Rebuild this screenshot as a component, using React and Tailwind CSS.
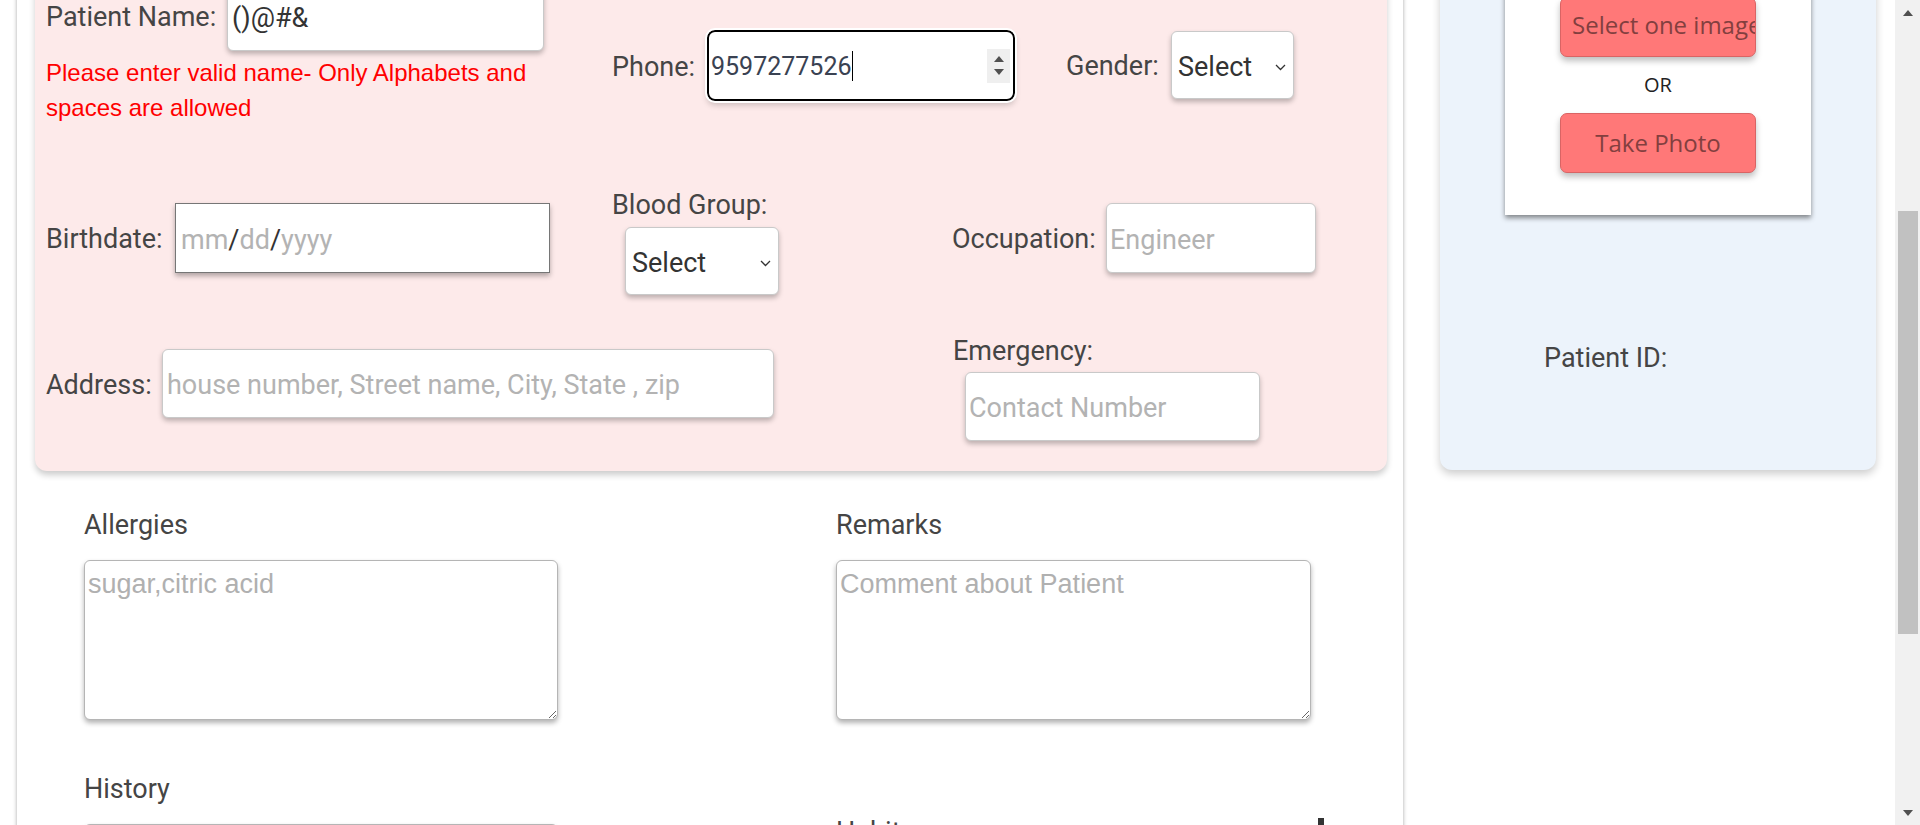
import React from 'react'

const label = "font-['Roboto',sans-serif] text-[27px] leading-[36px] text-[#454545] whitespace-nowrap shrink-0"
const field = "bg-white border border-[#c9c9c9] rounded-[6px] shadow-[0_3px_5px_rgba(0,0,0,0.25)] flex items-center pt-[4px] font-['Roboto',sans-serif] text-[27px] whitespace-nowrap overflow-hidden"
const hint = "text-[#b3b3b3]"
const area = "block resize-y bg-white border border-[#b5b5b5] rounded-[6px] shadow-[0_3px_5px_rgba(0,0,0,0.3)] pt-[8px] px-[3px] font-['Liberation_Sans',Arial,sans-serif] text-[27px] leading-[31px] text-[#333] placeholder:text-[#b0b0b0] outline-none"
const redBtn = "h-[60px] w-[196px] bg-[#ff7878] border border-[#d96464] rounded-[7px] shadow-[0_4px_6px_rgba(0,0,0,0.25)] flex items-center overflow-hidden whitespace-nowrap font-['Open_Sans',sans-serif] text-[24px] text-[#833f3f]"

function Chevron() {
  return (
    <svg width="11" height="7" viewBox="0 0 11 7" fill="none" stroke="#333" strokeWidth="1.3">
      <polyline points="1,1 5.5,5.5 10,1" />
    </svg>
  )
}

function SelectBox({ className }) {
  return (
    <div className={field + ' justify-between pl-[6px] pr-[7px] text-[#333] ' + className}>
      <span>Select</span>
      <Chevron />
    </div>
  )
}

function Triangle({ down }) {
  return (
    <svg width="10" height="6" viewBox="0 0 10 6">
      <polygon points={down ? '0,0 10,0 5,6' : '0,6 10,6 5,0'} fill="#505050" />
    </svg>
  )
}

export default function App() {
  return (
    <div className="w-[1920px] h-[825px] overflow-hidden flex bg-white">
      <div className="flex-1 flex items-start">
        {/* form column */}
        <div className="ml-[17px] w-[1386px] -mt-[60px] h-[1000px] shrink-0 bg-white shadow-[0_0_4px_rgba(0,0,0,0.35)] flex flex-col">
          <div className="ml-[18px] w-[1352px] bg-[#fdeaea] rounded-[12px] shadow-[0_4px_6px_rgba(0,0,0,0.2)] pt-[41px] pb-[30px] pl-[11px]">
            {/* name / phone / gender */}
            <div className="flex items-start">
              <div className="w-[566px] flex flex-col">
                <div className="flex items-center">
                  <span className={label + ' w-[181px] pt-[2px]'}>Patient Name:</span>
                  <div className={field + ' w-[317px] h-[70px] px-[4px] text-[#333]'}>()@#&amp;</div>
                </div>
                <p className="mt-[4px] w-[500px] font-['Liberation_Sans',Arial,sans-serif] text-[24px] leading-[35px] text-[#ff0000]">
                  Please enter valid name- Only Alphabets and spaces are allowed
                </p>
              </div>
              <div className="w-[454px] mt-[49px] flex items-center">
                <span className={label + ' w-[95px] pt-[2px]'}>Phone:</span>
                <div className="w-[308px] h-[71px] bg-white border-2 border-black rounded-[8px] outline-2 outline-white shadow-[0_4px_6px_rgba(0,0,0,0.2)] flex items-center pl-[2px] pr-[3px] font-['Roboto',sans-serif] text-[25px] text-[#3a4252]">
                  <span className="pt-[3px]">9597277526</span>
                  <span className="w-px h-[30px] bg-black" />
                  <div className="ml-auto w-[23px] h-[34px] bg-[#efefef] flex flex-col items-center justify-center gap-[7px]">
                    <Triangle />
                    <Triangle down />
                  </div>
                </div>
              </div>
              <div className="mt-[50px] flex items-center">
                <span className={label + ' w-[105px] pt-[2px]'}>Gender:</span>
                <SelectBox className="w-[123px] h-[68px]" />
              </div>
            </div>

            {/* birthdate / blood group / occupation */}
            <div className="flex items-start mt-[60px]">
              <div className="w-[566px] mt-[18px] flex items-center">
                <span className={label + ' w-[129px] pt-[2px]'}>Birthdate:</span>
                <div className="w-[375px] h-[70px] bg-white border border-[#767676] shadow-[0_3px_5px_rgba(0,0,0,0.3)] flex items-center pl-[5px] pt-[4px] font-['Roboto',sans-serif] text-[27px] text-[#333]">
                  <span className={hint}>mm</span>/<span className={hint}>dd</span>/<span className={hint}>yyyy</span>
                </div>
              </div>
              <div className="w-[340px] flex flex-col">
                <span className={label + ' pt-[2px]'}>Blood Group:</span>
                <SelectBox className="ml-[13px] mt-[4px] w-[154px] h-[68px]" />
              </div>
              <div className="mt-[18px] flex items-center">
                <span className={label + ' w-[154px] pt-[2px]'}>Occupation:</span>
                <div className={field + ' w-[210px] h-[70px] px-[3px] ' + hint}>Engineer</div>
              </div>
            </div>

            {/* address / emergency */}
            <div className="flex items-start mt-[36px]">
              <div className="w-[907px] mt-[18px] flex items-center">
                <span className={label + ' w-[116px] pt-[2px]'}>Address:</span>
                <div className={field + ' w-[612px] h-[69px] px-[4px] ' + hint}>house number, Street name, City, State , zip</div>
              </div>
              <div className="flex flex-col">
                <span className={label + ' pt-[2px]'}>Emergency:</span>
                <div className={field + ' ml-[12px] mt-[3px] w-[295px] h-[69px] px-[3px] ' + hint}>Contact Number</div>
              </div>
            </div>
          </div>

          {/* notes */}
          <div className="flex pl-[67px] mt-[36px]">
            <div className="w-[752px] flex flex-col">
              <span className={label}>Allergies</span>
              <textarea readOnly className={area + ' mt-[17px] w-[474px] h-[160px]'} placeholder="sugar,citric acid" />
              <span className={label + ' mt-[51px]'}>History</span>
              <textarea readOnly className={area + ' mt-[17px] w-[474px] h-[160px]'} />
            </div>
            <div className="flex flex-col">
              <span className={label}>Remarks</span>
              <textarea readOnly className={area + ' mt-[17px] w-[475px] h-[160px]'} placeholder="Comment about Patient" />
              <div className="mt-[94px] w-[488px] flex justify-between items-start">
                <span className={label}>Habits</span>
                <div className="mt-[4px] w-[6px] h-[24px] bg-[#333]" />
              </div>
            </div>
          </div>
        </div>

        {/* photo column */}
        <div className="ml-[37px] w-[436px] -mt-[60px] shrink-0 bg-[#ecf3fb] rounded-[12px] shadow-[0_4px_8px_rgba(0,0,0,0.2)] flex flex-col pb-[94px]">
          <div className="ml-[65px] w-[306px] bg-white shadow-[0_3px_5px_rgba(0,0,0,0.45)] pt-[57px] pb-[42px] flex flex-col items-center">
            <div className={redBtn + ' pl-[11px] pb-[4px]'}>Select one image</div>
            <div className="h-[56px] flex items-center font-['Open_Sans',sans-serif] text-[20px] text-[#222]">OR</div>
            <div className={redBtn + ' justify-center'}>Take Photo</div>
          </div>
          <span className={label + ' mt-[125px] pl-[104px]'}>Patient ID:</span>
        </div>
      </div>

      {/* scrollbar */}
      <div className="w-[25px] h-full shrink-0 bg-[#f1f1f1] flex flex-col items-center">
        <div className="h-[25px] flex items-center"><Triangle /></div>
        <div className="mt-[186px] w-[20px] h-[423px] bg-[#c1c1c1]" />
        <div className="mt-auto h-[25px] flex items-center"><Triangle down /></div>
      </div>
    </div>
  )
}
